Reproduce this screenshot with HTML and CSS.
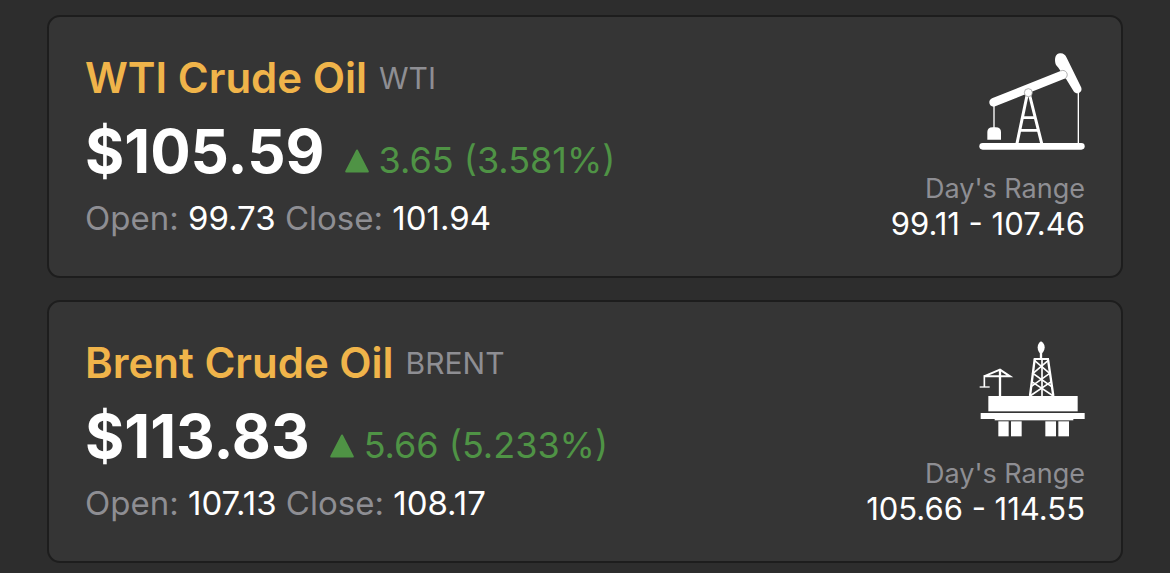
FILE: index.html
```html
<!DOCTYPE html>
<html lang="en">

<head>
    <meta charset="UTF-8">
    <meta name="viewport" content="width=device-width, initial-scale=1.0">
    <title>Crude Oil Prices</title>
    <link rel="stylesheet" href="styles.css">
</head>

<body>
    <main class="quotes">
        <article class="card">
            <div class="quote">
                <div class="name-row">
                    <h2 class="name">WTI Crude Oil</h2>
                    <span class="ticker">WTI</span>
                </div>
                <div class="price-row">
                    <span class="price">$105.59</span>
                    <span class="change">
                        <svg class="arrow" viewBox="0 0 24 24" aria-hidden="true">
                            <path d="M12 1.5 L22.8 22.5 H1.2 Z" />
                        </svg>
                        3.65 (3.581%)
                    </span>
                </div>
                <p class="session">Open: <span class="value">99.73</span> Close: <span class="value">101.94</span></p>
            </div>
            <div class="range">
                <!-- pump jack -->
                <svg class="icon" viewBox="51 36 324 300" aria-hidden="true">
                    <g fill="none" stroke="#fff" stroke-linecap="round">
                        <path d="M68 319 H364" stroke-width="20" />
                        <path d="M102 190 V268 M355 150 V312" stroke-width="4" />
                        <path d="M171 310 L202 162 M245 310 L208 162" stroke-width="9" />
                        <path d="M190 233 H224 M182 271 H234" stroke-width="8" />
                        <path d="M101 187 L312 103" stroke-width="26" />
                    </g>
                    <path fill="#fff" d="M82 299 V276 Q82 262 98 262 H107 Q123 262 123 276 V299 Z" />
                    <path fill="#fff" d="M286 69 C283 52 288 41 300 40 C309 39 316 44 320 53 L363 141 C367 150 363 158 353 160 C348 161 342 157 339 151 L317 115 L294 82 C290 78 287 74 286 69 Z" />
                    <path class="joint" d="M302 93 A12 12 0 1 1 315 116" />
                    <circle class="joint" cx="205" cy="158" r="12" />
                </svg>
                <span class="range-label">Day's Range</span>
                <span class="range-value">99.11 - 107.46</span>
            </div>
        </article>

        <article class="card">
            <div class="quote">
                <div class="name-row">
                    <h2 class="name">Brent Crude Oil</h2>
                    <span class="ticker">BRENT</span>
                </div>
                <div class="price-row">
                    <span class="price">$113.83</span>
                    <span class="change">
                        <svg class="arrow" viewBox="0 0 24 24" aria-hidden="true">
                            <path d="M12 1.5 L22.8 22.5 H1.2 Z" />
                        </svg>
                        5.66 (5.233%)
                    </span>
                </div>
                <p class="session">Open: <span class="value">107.13</span> Close: <span class="value">108.17</span></p>
            </div>
            <div class="range">
                <!-- offshore platform -->
                <svg class="icon" viewBox="51 21 324 300" aria-hidden="true">
                    <g fill="#fff">
                        <rect x="85" y="198" width="268" height="46" />
                        <rect x="62" y="249" width="312" height="18" />
                        <rect x="104" y="264" width="236" height="7" />
                        <rect x="115" y="274" width="31" height="45" />
                        <rect x="153" y="274" width="32" height="45" />
                        <rect x="256" y="274" width="32" height="45" />
                        <rect x="295" y="274" width="32" height="45" />
                        <path d="M243 34 C251 39 254 45 254 52 C254 60 250 66 246 70 H240 C236 66 233 60 233 52 C233 45 236 39 243 34 Z" />
                    </g>
                    <g fill="none" stroke="#fff">
                        <path d="M243 68 V88" stroke-width="7" />
                        <path d="M246 88 V198" stroke-width="5" />
                        <path d="M221 87 H267" stroke-width="6" />
                        <path d="M224 88 L210 198 M264 88 L280 198" stroke-width="7" />
                        <path d="M224 92 L269 130 M264 92 L219 130 L275 170 M269 130 L213 170 M210 198 L275 154 M280 198 L214 154" stroke-width="5" />
                        <path d="M120 118 V198" stroke-width="7" />
                        <path d="M72 139 H150 L120 119 L72 139" stroke-width="6" />
                        <path d="M73 136 V171" stroke-width="5" />
                        <path d="M59 171 H89" stroke-width="4" />
                    </g>
                </svg>
                <span class="range-label">Day's Range</span>
                <span class="range-value">105.66 - 114.55</span>
            </div>
        </article>
    </main>
</body>

</html>
```

FILE: styles.css
```css
* {
    margin: 0;
    padding: 0;
    box-sizing: border-box;
}

body {
    font-family: Inter, "Liberation Sans", sans-serif;
    background-color: #2d2d2d;
    color: #8e8e93;
}

.quotes {
    display: flex;
    flex-direction: column;
    gap: 22px;
    padding: 15px 47px 10px;
}

.card {
    display: flex;
    justify-content: space-between;
    padding: 35px 36px 34px;
    background: #353535;
    border: 2px solid #1d1d1d;
    border-radius: 13px;
}

.quote {
    display: flex;
    flex-direction: column;
    gap: 12px;
}

.name-row {
    display: flex;
    align-items: center;
    gap: 12px;
    line-height: 52px;
}

.name {
    color: #f0b44a;
    font-size: 42px;
    font-weight: 600;
}

.ticker {
    font-size: 30px;
}

.price-row {
    display: flex;
    align-items: baseline;
    gap: 20px;
}

.price {
    color: #fff;
    font-size: 60px;
    font-weight: 700;
    line-height: 70px;
}

.change {
    display: flex;
    align-items: baseline;
    gap: 10px;
    color: #4f9345;
    font-size: 36px;
    line-height: 40px;
}

.arrow {
    width: 24px;
    height: 24px;
    fill: #4f9345;
    stroke: #4f9345;
    stroke-width: 2;
    stroke-linejoin: round;
}

.session {
    font-size: 33px;
    line-height: 40px;
}

.value {
    color: #fff;
}

.range {
    display: flex;
    flex-direction: column;
    align-items: flex-end;
}

.icon {
    width: 108px;
    height: 100px;
    margin-bottom: 20px;
}

.joint {
    fill: #fff;
    stroke: #888;
    stroke-width: 2;
}

.range-label {
    font-size: 27px;
    line-height: 34px;
}

.range-value {
    color: #fff;
    font-size: 31px;
    line-height: 36px;
}
```
